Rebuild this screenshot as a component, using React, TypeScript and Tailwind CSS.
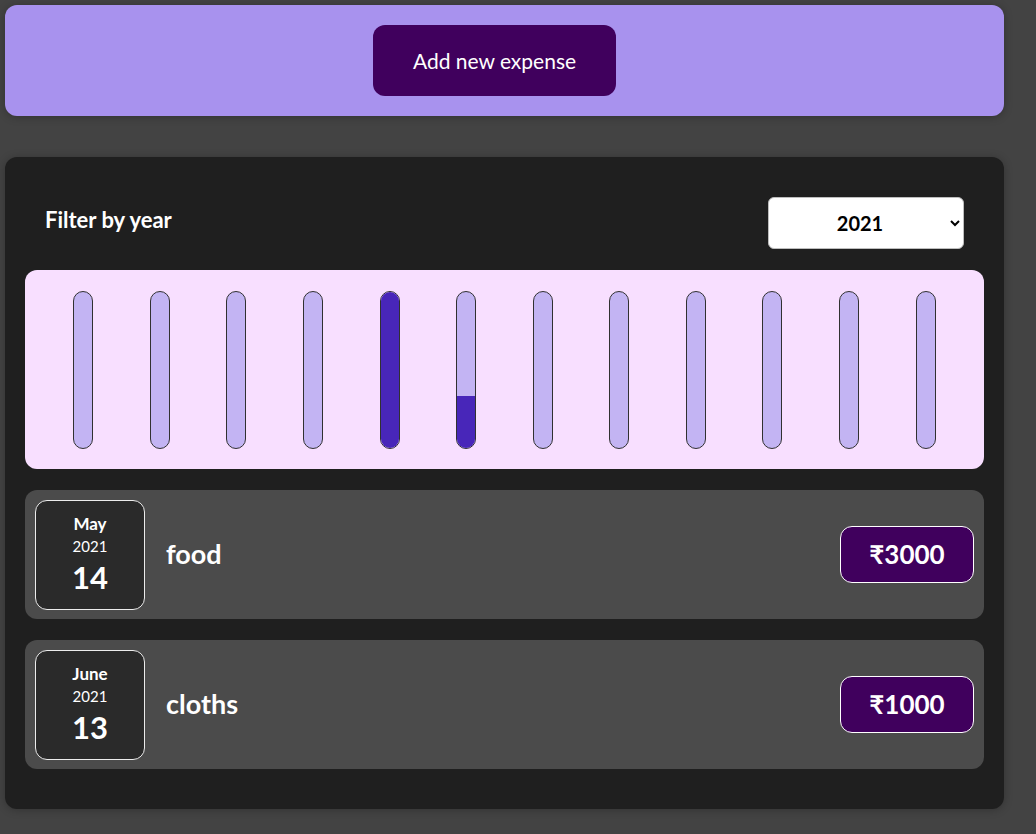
const font = { fontFamily: "Lato, 'Noto Sans', 'DejaVu Sans', sans-serif" };

const months = ["Jan", "Feb", "Mar", "Apr", "May", "Jun", "Jul", "Aug", "Sep", "Oct", "Nov", "Dec"];

const expenses = [
	{ id: "e1", month: "May", year: "2021", day: "14", title: "food", amount: 3000 },
	{ id: "e2", month: "June", year: "2021", day: "13", title: "cloths", amount: 1000 },
];

const fills = [0, 0, 0, 0, 100, 33.3, 0, 0, 0, 0, 0, 0];

function ChartBar({ fill }: { fill: number }) {
	return (
		<div className="flex flex-1 justify-center">
			<div className="flex h-[158px] w-[20px] flex-col justify-end overflow-hidden rounded-full border border-[#313131] bg-[#c3b4f3]">
				<div className="w-full bg-[#4826b9]" style={{ height: `${fill}%` }} />
			</div>
		</div>
	);
}

function ExpenseItem({ month, year, day, title, amount }: (typeof expenses)[number]) {
	return (
		<div className="mt-[21px] flex h-[129px] items-center rounded-xl bg-[#4b4b4b] px-[10px]">
			<div className="flex h-[110px] w-[110px] flex-col items-center justify-center rounded-xl border border-[#ececec] bg-[#2a2a2a] text-white">
				<div className="text-[17px] font-bold leading-[22px]">{month}</div>
				<div className="text-[15px] leading-[22px]">{year}</div>
				<div className="text-[31px] font-bold leading-[40px]">{day}</div>
			</div>
			<div className="ml-[21px] flex-1 text-[27px] font-bold text-white">{title}</div>
			<div className="flex h-[57px] w-[134px] items-center justify-center rounded-xl border border-white bg-[#40005d] text-[26px] font-bold text-white">
				₹{amount}
			</div>
		</div>
	);
}

export default function App() {
	return (
		<div className="min-h-screen bg-[#434343] px-[5px] pt-[5px] pb-[25px]" style={font}>
			<div className="flex h-[111px] w-[999px] items-center justify-center rounded-xl bg-[#a892ee] shadow-[0_1px_8px_rgba(0,0,0,0.25)]">
				<button className="mr-[20px] h-[71px] w-[243px] rounded-xl bg-[#40005d] text-[21px] text-white">
					Add new expense
				</button>
			</div>

			<div className="mt-[41px] w-[999px] rounded-xl bg-[#1f1f1f] px-[20px] pt-[40px] pb-[40px] shadow-[0_1px_8px_rgba(0,0,0,0.25)]">
				<div className="flex h-[52px] items-center justify-between px-[20px]">
					<span className="mb-[8px] text-[22px] font-bold text-white">Filter by year</span>
					<select
						defaultValue="2021"
						className="h-[52px] w-[196px] rounded-md border border-[#bdbdbd] bg-white px-3 text-[20px] font-bold text-black [text-align-last:center]"
					>
						<option>2022</option>
						<option>2021</option>
						<option>2020</option>
						<option>2019</option>
					</select>
				</div>

				<div className="mt-[21px] flex h-[199px] items-center rounded-xl bg-[#f8dfff] px-[20px]">
					{months.map((m, i) => (
						<ChartBar key={m} fill={fills[i]} />
					))}
				</div>

				{expenses.map((e) => (
					<ExpenseItem key={e.id} {...e} />
				))}
			</div>
		</div>
	);
}
